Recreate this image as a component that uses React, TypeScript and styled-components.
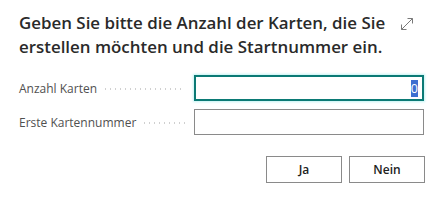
import React from "react";
import styled, { createGlobalStyle } from "styled-components";

const Global = createGlobalStyle`
  html, body { margin: 0; padding: 0; background: #ffffff; }
  body { font-family: "Open Sans", "Noto Sans", sans-serif; }
`;

const Dialog = styled.div`
  width: 442px;
  height: 201px;
  box-sizing: border-box;
  padding: 11px 18px 0 19px;
  display: flex;
  flex-direction: column;
  background: #fff;
`;

const Header = styled.div`
  display: flex;
  align-items: flex-start;
  justify-content: space-between;
`;

const Title = styled.h1`
  margin: 0;
  font-size: 16.9px;
  font-weight: 600;
  line-height: 24px;
  color: #2a2a2a;
  width: 380px;
  letter-spacing: 0;
`;

const ExpandButton = styled.div`
  width: 16px;
  height: 16px;
  margin-top: 5px;
  margin-right: 9px;
  color: #7a7a7a;
  display: flex;
`;

const Fields = styled.div`
  display: flex;
  flex-direction: column;
  gap: 8px;
  margin-top: 16px;
`;

const Row = styled.div`
  display: grid;
  grid-template-columns: 175px 230px;
  align-items: center;
`;

const Label = styled.div`
  display: flex;
  align-items: center;
  font-size: 12px;
  color: #505050;
  padding-right: 9px;
  white-space: nowrap;
  &::after {
    content: "";
    flex: 1;
    margin-left: 6px;
    height: 2px;
    background-image: radial-gradient(circle, #d0d0d0 0.7px, transparent 0.8px);
    background-size: 5px 2px;
    background-repeat: repeat-x;
    margin-top: 2px;
  }
`;

const Input = styled.input<{ $focused?: boolean }>`
  box-sizing: border-box;
  width: 230px;
  height: 26px;
  margin: 0;
  padding: 0 4px;
  font-family: "Open Sans", sans-serif;
  font-size: 12.5px;
  color: #212121;
  text-align: right;
  background: #fff;
  outline: none;
  border: ${(p) => (p.$focused ? "2px solid #0b7a75" : "1px solid #8a8a8a")};
  box-shadow: ${(p) => (p.$focused ? "0 0 2px 1px rgba(170, 240, 240, 0.7)" : "none")};
  &::selection {
    background: #3d6fd0;
    color: #fff;
  }
`;

const Footer = styled.div`
  display: flex;
  justify-content: flex-end;
  gap: 7px;
  margin-top: 21px;
  margin-right: -1px;
`;

const Button = styled.button`
  box-sizing: border-box;
  width: 76px;
  height: 27px;
  border: 1px solid #8a8a8a;
  background: #fff;
  font-family: "Open Sans", sans-serif;
  font-size: 12px;
  font-weight: 600;
  color: #212121;
  padding: 0;
`;

export default function App() {
  const ref = React.useRef<HTMLInputElement>(null);
  React.useEffect(() => {
    const el = ref.current;
    if (el) {
      el.focus();
      el.setSelectionRange(0, 1);
    }
  }, []);
  return (
    <>
      <Global />
      <Dialog>
        <Header>
          <Title>
            Geben Sie bitte die Anzahl der Karten, die Sie erstellen möchten und die Startnummer ein.
          </Title>
          <ExpandButton>
            <svg width="16" height="16" viewBox="0 0 16 16" fill="none" stroke="currentColor" strokeWidth="1">
              <path d="M2.5 13.5 L13.5 2.5" />
              <path d="M8.5 2.5 H13.5 V7.5" />
              <path d="M2.5 8.5 V13.5 H7.5" />
            </svg>
          </ExpandButton>
        </Header>
        <Fields>
          <Row>
            <Label>Anzahl Karten</Label>
            <Input ref={ref} $focused defaultValue="0" />
          </Row>
          <Row>
            <Label>Erste Kartennummer</Label>
            <Input defaultValue="" />
          </Row>
        </Fields>
        <Footer>
          <Button>Ja</Button>
          <Button>Nein</Button>
        </Footer>
      </Dialog>
    </>
  );
}
